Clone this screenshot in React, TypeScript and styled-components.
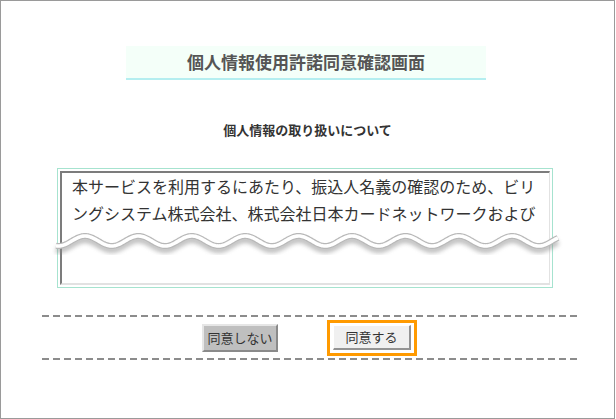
import React from "react";
import styled, { createGlobalStyle } from "styled-components";

const GlobalStyle = createGlobalStyle`
  html, body { margin: 0; padding: 0; background: #ffffff; }
  body { font-family: "Noto Sans CJK JP", "Noto Sans", sans-serif; }
`;

const Frame = styled.div`
  width: 615px;
  height: 419px;
  box-sizing: border-box;
  border: 1px solid #9a9a9a;
  background: #ffffff;
  display: flex;
  flex-direction: column;
  align-items: flex-start;
  font-family: "Noto Sans CJK JP", "Noto Sans", sans-serif;
`;

const TitleBar = styled.h1`
  margin: 45px 0 0 125px;
  width: 360px;
  height: 34px;
  box-sizing: border-box;
  background: #f4fff9;
  border-bottom: 2px solid #b4eef0;
  font-size: 17px;
  font-weight: bold;
  line-height: 32px;
  color: #555555;
  text-align: center;
`;

const Subtitle = styled.h2`
  margin: 40px 0 0 0;
  width: 100%;
  font-size: 13px;
  font-weight: bold;
  line-height: 20px;
  color: #333333;
  text-align: center;
`;

const TermsBox = styled.div`
  position: relative;
  margin: 28px 0 0 56px;
  width: 496px;
  height: 120px;
  box-sizing: border-box;
  border: 1px solid #a6e3cf;
  padding: 2px;
`;

const TermsText = styled.div`
  height: 100%;
  box-sizing: border-box;
  border-style: solid;
  border-width: 2px 1px 2px 2px;
  border-color: #7c7c7c #e2e2e2 #e2e2e2 #7c7c7c;
  padding: 0 10px;
  font-size: 16px;
  line-height: 27px;
  color: #333333;
  overflow: hidden;
  white-space: nowrap;
`;

const Tear = styled.svg`
  position: absolute;
  left: -2px;
  top: 60px;
  overflow: visible;
`;

const Divider = styled.div<{ $top: number }>`
  margin: ${(p) => p.$top}px 0 0 41px;
  width: 535px;
  height: 2px;
  background: repeating-linear-gradient(
    90deg,
    #8c8c8c 0,
    #8c8c8c 7px,
    transparent 7px,
    transparent 11px
  );
`;

const ButtonRow = styled.div`
  margin-left: 41px;
  width: 535px;
  height: 41px;
  box-sizing: border-box;
  padding-left: 160px;
  display: flex;
  align-items: center;
`;

const BaseButton = styled.button`
  font-family: "Noto Sans CJK JP", "Noto Sans", sans-serif;
  font-size: 13px;
  color: #333333;
  padding: 0;
  box-sizing: border-box;
  border-style: solid;
  cursor: pointer;
`;

const DeclineButton = styled(BaseButton)`
  width: 76px;
  height: 28px;
  background: #bfbfbf;
  border-width: 2px;
  border-color: #e6e6e6 #8a8a8a #8a8a8a #e6e6e6;
`;

const Highlight = styled.div`
  margin-left: 49px;
  border: 3px solid #ff9a00;
  padding: 2px 3px 3px 3px;
  display: flex;
`;

const AgreeButton = styled(BaseButton)`
  width: 78px;
  height: 25px;
  background: #f0f0f0;
  border-width: 1px 2px 2px 1px;
  border-color: #ffffff #939393 #939393 #ffffff;
`;

function wavePath(width: number, mid: number, amp: number, period: number, crest: number) {
  const pts: string[] = [];
  for (let x = 0; x <= width; x += 1) {
    const y = mid - amp * Math.cos((2 * Math.PI * (x - crest)) / period);
    pts.push(`${x === 0 ? "M" : "L"}${x},${y.toFixed(2)}`);
  }
  return pts.join(" ");
}

const TearLine: React.FC = () => {
  const w = 502;
  const d = wavePath(w, 12, 5, 53.4, 29);
  return (
    <Tear width={w} height={30} viewBox={`0 0 ${w} 30`}>
      <defs>
        <filter id="tearShadow" x="-5%" y="-50%" width="110%" height="200%">
          <feGaussianBlur stdDeviation="2.2" />
        </filter>
      </defs>
      <path d={d} transform="translate(0,4)" stroke="#8a8a8a" strokeWidth={6} fill="none" opacity={0.55} filter="url(#tearShadow)" />
      <path d={d} stroke="#b8b8b8" strokeWidth={6} fill="none" />
      <path d={d} stroke="#ffffff" strokeWidth={3.6} fill="none" />
    </Tear>
  );
};

export default function App() {
  return (
    <>
      <GlobalStyle />
      <Frame>
        <TitleBar>個人情報使用許諾同意確認画面</TitleBar>
        <Subtitle>個人情報の取り扱いについて</Subtitle>
        <TermsBox>
          <TermsText>
            本サービスを利用するにあたり、振込人名義の確認のため、ビリ
            <br />
            ングシステム株式会社、株式会社日本カードネットワークおよび
          </TermsText>
          <TearLine />
        </TermsBox>
        <Divider $top={27} />
        <ButtonRow>
          <DeclineButton type="button">同意しない</DeclineButton>
          <Highlight>
            <AgreeButton type="button">同意する</AgreeButton>
          </Highlight>
        </ButtonRow>
        <Divider $top={0} />
      </Frame>
    </>
  );
}
